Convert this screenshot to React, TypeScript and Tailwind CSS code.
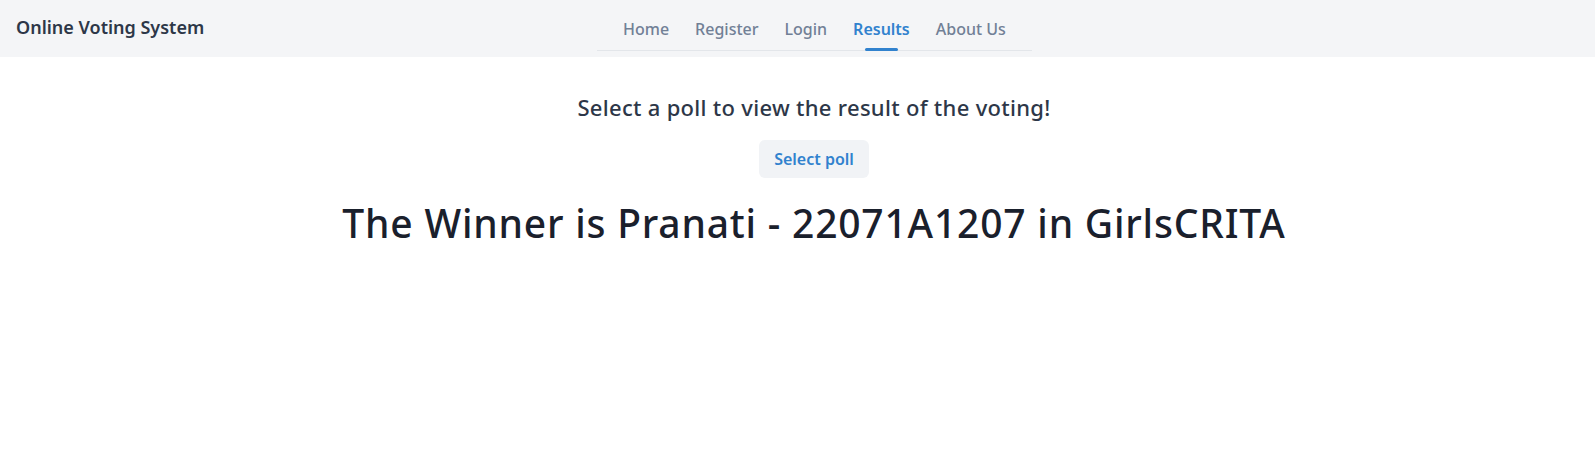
import React from "react";

const tabs = ["Home", "Register", "Login", "Results", "About Us"];

const App = () => {
  return (
    <div className="min-h-[460px] bg-white text-[#1a202c]" style={{ fontFamily: '"Noto Sans", "Open Sans", sans-serif' }}>
      <nav className="h-[57px] bg-[#f4f5f7] flex px-4">
        <div className="w-[581px] shrink-0 pt-[13px] text-lg leading-7 font-semibold text-[#2d3748]">Online Voting System</div>
        <div className="pt-[17px]">
          <ul className="flex px-[13px] border-b border-[#e3e6ea]">
            {tabs.map((t) => {
              const active = t === "Results";
              return (
                <li key={t} className="flex flex-col items-center px-[13px]">
                  <span
                    className={
                      "text-base leading-6 " +
                      (active ? "text-[#3182ce] font-semibold" : "text-[#718096] font-medium")
                    }
                  >
                    {t}
                  </span>
                  <span
                    className={
                      "mt-[7px] -mb-px h-[3px] w-[33px] rounded-full " + (active ? "bg-[#3182ce]" : "bg-transparent")
                    }
                  />
                </li>
              );
            })}
          </ul>
        </div>
      </nav>
      <main className="flex flex-col items-center pt-[35px] pl-[33px]">
        <h2 className="text-[22px] leading-[30px] tracking-[0.3px] font-medium text-[#2d3748]">
          Select a poll to view the result of the voting!
        </h2>
        <button className="mt-[18px] h-[38px] px-[15px] rounded-md bg-[#f1f3f6] text-[#3182ce] font-semibold text-base">
          Select poll
        </button>
        <h1 className="mt-[21px] text-[39px] leading-[47px] tracking-[0.8px] font-medium text-[#1a202c]">
          The Winner is Pranati - 22071A1207 in GirlsCRITA
        </h1>
      </main>
    </div>
  );
};

export default App;
